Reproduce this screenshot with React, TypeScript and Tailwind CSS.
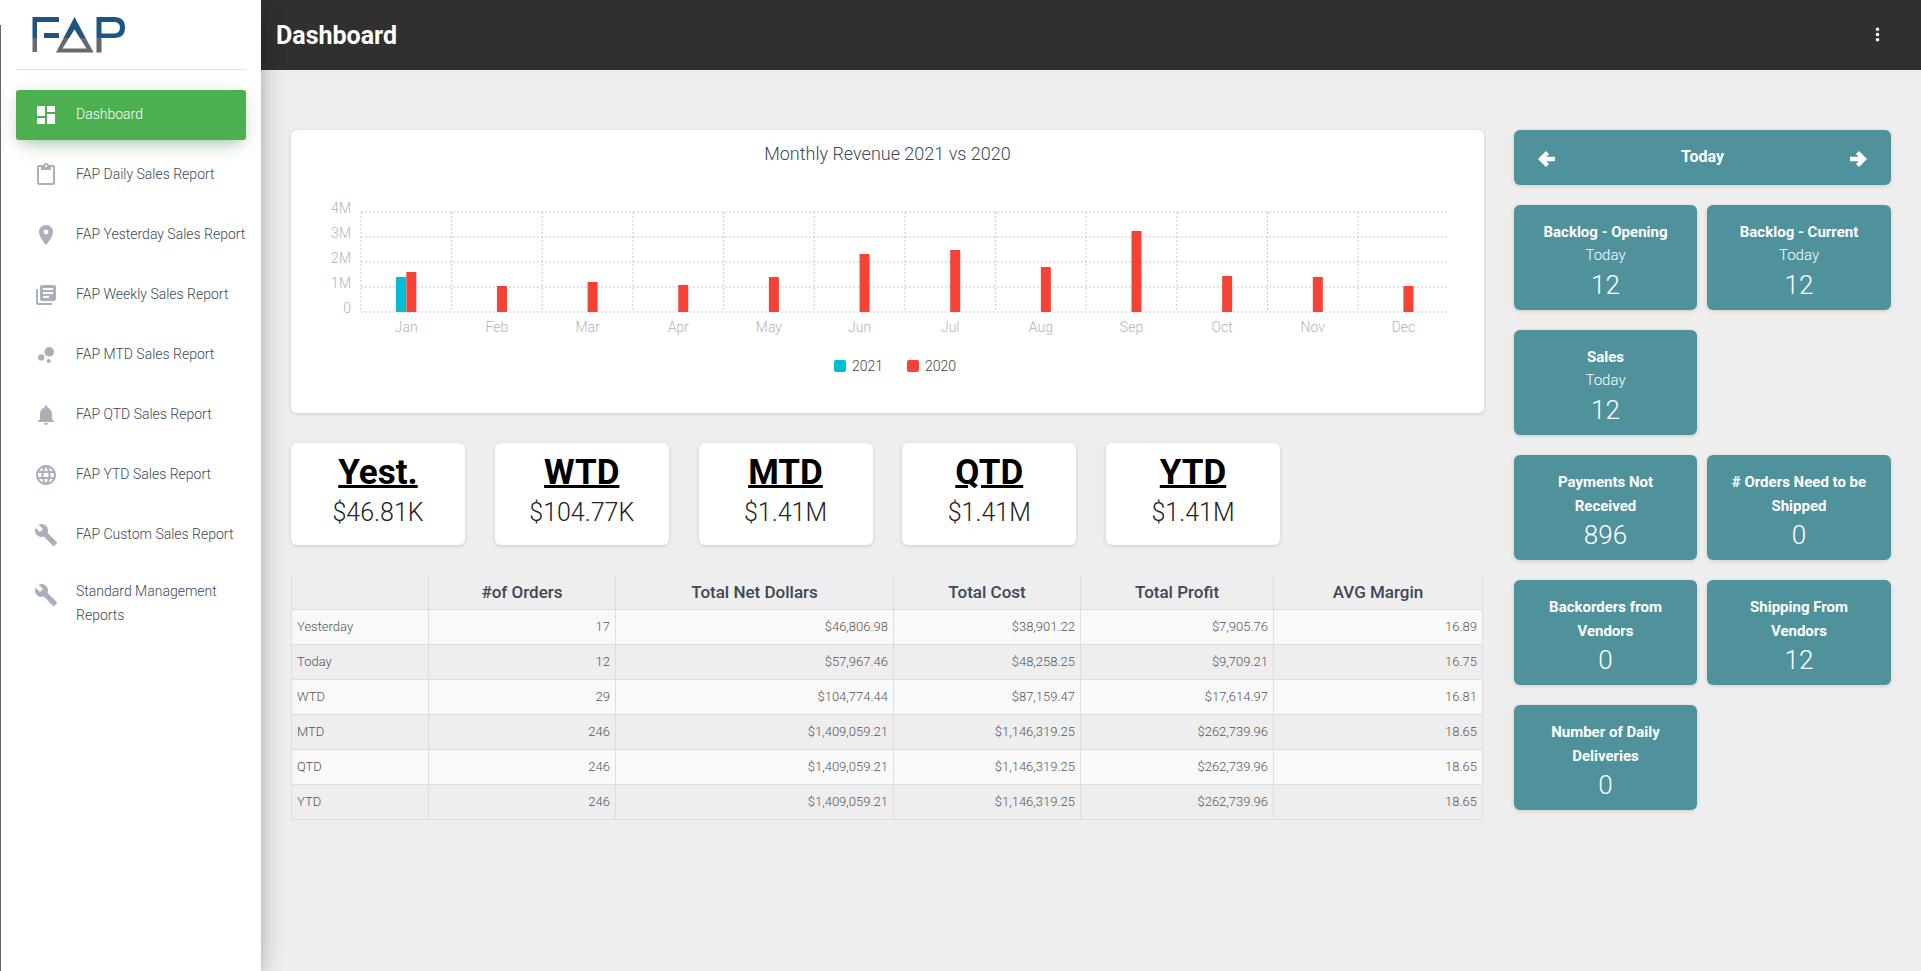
import {
  MdBubbleChart,
  MdBuild,
  MdContentPaste,
  MdDashboard,
  MdLanguage,
  MdLibraryBooks,
  MdLocationOn,
  MdMoreVert,
  MdNotifications,
} from "react-icons/md";

const navItems = [
  { label: "Dashboard", icon: MdDashboard, active: true },
  { label: "FAP Daily Sales Report", icon: MdContentPaste },
  { label: "FAP Yesterday Sales Report", icon: MdLocationOn },
  { label: "FAP Weekly Sales Report", icon: MdLibraryBooks },
  { label: "FAP MTD Sales Report", icon: MdBubbleChart },
  { label: "FAP QTD Sales Report", icon: MdNotifications },
  { label: "FAP YTD Sales Report", icon: MdLanguage },
  { label: "FAP Custom Sales Report", icon: MdBuild },
];

const months = [
  { name: "Jan", h: 40 },
  { name: "Feb", h: 26 },
  { name: "Mar", h: 30 },
  { name: "Apr", h: 27 },
  { name: "May", h: 35 },
  { name: "Jun", h: 58 },
  { name: "Jul", h: 62 },
  { name: "Aug", h: 45 },
  { name: "Sep", h: 81 },
  { name: "Oct", h: 36 },
  { name: "Nov", h: 35 },
  { name: "Dec", h: 26 },
];

const stats = [
  { title: "Yest.", value: "$46.81K" },
  { title: "WTD", value: "$104.77K" },
  { title: "MTD", value: "$1.41M" },
  { title: "QTD", value: "$1.41M" },
  { title: "YTD", value: "$1.41M" },
];

const rows = [
  ["Yesterday", "17", "$46,806.98", "$38,901.22", "$7,905.76", "16.89"],
  ["Today", "12", "$57,967.46", "$48,258.25", "$9,709.21", "16.75"],
  ["WTD", "29", "$104,774.44", "$87,159.47", "$17,614.97", "16.81"],
  ["MTD", "246", "$1,409,059.21", "$1,146,319.25", "$262,739.96", "18.65"],
  ["QTD", "246", "$1,409,059.21", "$1,146,319.25", "$262,739.96", "18.65"],
  ["YTD", "246", "$1,409,059.21", "$1,146,319.25", "$262,739.96", "18.65"],
];

const tiles = [
  { title: "Backlog - Opening", sub: "Today", value: "12" },
  { title: "Backlog - Current", sub: "Today", value: "12" },
  { title: "Sales", sub: "Today", value: "12" },
  { title: "Payments Not Received", value: "896", first: true },
  { title: "# Orders Need to be Shipped", value: "0" },
  { title: "Backorders from Vendors", value: "0" },
  { title: "Shipping From Vendors", value: "12" },
  { title: "Number of Daily Deliveries", value: "0" },
];

function Logo() {
  return (
    <svg className="absolute left-0 top-0" width="140" height="60" viewBox="0 0 140 60">
      <defs>
        <linearGradient id="logoFill" gradientUnits="userSpaceOnUse" x1="0" y1="17" x2="0" y2="52">
          <stop offset="0.59" stopColor="#1f5583" />
          <stop offset="0.59" stopColor="#666a6e" />
        </linearGradient>
      </defs>
      <g fill="url(#logoFill)">
        <path d="M32.5 17H59V22H37V52H32.5Z" />
        <path d="M44 33H59V38H44Z" />
        <path fillRule="evenodd" d="M74.5 17L93.5 52.5H56ZM74.5 29.5L62.5 48.5H86.5Z" />
        <path
          fillRule="evenodd"
          d="M96.5 17H114Q125 17 125 27.5Q125 38 114 38H101.5V52.5H96.5ZM101.5 22V33.5H113.5Q120 33.5 120 27.5Q120 22 113.5 22Z"
        />
      </g>
    </svg>
  );
}

// thick arrow, same shape both ways
function Arrow({ flip }: { flip?: boolean }) {
  return (
    <svg width="18" height="18" viewBox="0 0 18 18" className={flip ? "mt-[2px] -scale-x-100" : "mt-[2px]"}>
      <path d="M9.5 2.5L3 9L9.5 15.5M3.5 9H17" fill="none" stroke="white" strokeWidth="4.4" />
    </svg>
  );
}

function Sidebar() {
  return (
    <aside className="relative z-10 h-full w-[261px] shrink-0 bg-white shadow-[0_10px_30px_-12px_rgba(0,0,0,0.42),0_4px_25px_0_rgba(0,0,0,0.12),0_8px_10px_-5px_rgba(0,0,0,0.2)]">
      <Logo />
      <div className="absolute left-0 top-[25px] bottom-0 w-px bg-[#666]" />
      <div className="ml-4 h-[70px] w-[230px] border-b border-[#e2e2e2]" />
      <nav className="ml-4 mt-5 flex w-[230px] flex-col gap-[10px]">
        {navItems.map((item) => (
          <a
            key={item.label}
            className={
              item.active
                ? "flex h-[50px] rounded-[3px] bg-[#4caf50] pl-[18px] pt-[13px] text-white shadow-[0_12px_20px_-10px_rgba(76,175,80,0.28),0_4px_20px_0_rgba(0,0,0,0.12),0_7px_8px_-5px_rgba(76,175,80,0.2)]"
                : "flex h-[50px] pl-[18px] pt-[13px] text-[#3c4858]"
            }
          >
            <item.icon size={24} className={item.active ? "mr-[18px] text-white" : "mr-[18px] text-[#a9afbb]"} />
            <span className="-mt-px whitespace-nowrap text-sm font-light leading-6">{item.label}</span>
          </a>
        ))}
        <a className="flex pl-[18px] pt-[13px] text-[#3c4858]">
          <MdBuild size={24} className="mr-[18px] text-[#a9afbb]" />
          <span className="-mt-1 w-[150px] text-sm font-light leading-6">Standard Management Reports</span>
        </a>
      </nav>
    </aside>
  );
}

function RevenueChart() {
  const left = 361;
  const step = 90.65;
  const base = 312;
  return (
    <div className="h-[283px] rounded-md bg-white shadow-[0_1px_4px_0_rgba(0,0,0,0.14)]">
      <div className="h-9 pt-[11px] text-center text-lg font-light leading-[26px] text-[#3c4858]">
        Monthly Revenue 2021 vs 2020
      </div>
      <svg width="1193" height="247" viewBox="291 166 1193 247" className="block">
        {[0, 1, 2, 3, 4].map((i) => (
          <line key={i} x1={left} x2={1448} y1={212 + i * 25} y2={212 + i * 25} stroke="#c9c9c9" strokeDasharray="2 2" />
        ))}
        {months.map((m, i) => (
          <line
            key={m.name}
            x1={left + i * step}
            x2={left + i * step}
            y1={212}
            y2={base}
            stroke="#c9c9c9"
            strokeDasharray="2 2"
          />
        ))}
        {["4M", "3M", "2M", "1M", "0"].map((t, i) => (
          <text key={t} x={351} y={212.5 + i * 25} textAnchor="end" fontSize="14" fontWeight="300" fill="#b4b4b4">
            {t}
          </text>
        ))}
        <rect x={396} y={277} width={10} height={35} fill="#00bcd4" />
        {months.map((m, i) => (
          <g key={m.name}>
            <rect x={left + i * step + 45.3} y={base - m.h} width={10} height={m.h} fill="#f44336" />
            <text
              x={left + i * step + 45.3}
              y={332}
              textAnchor="middle"
              fontSize="14"
              fontWeight="300"
              fill="#b4b4b4"
            >
              {m.name}
            </text>
          </g>
        ))}
        <rect x={834} y={360} width={12} height={12} rx={2} fill="#00bcd4" />
        <text x={852} y={371} fontSize="14" fontWeight="300" fill="#444">
          2021
        </text>
        <rect x={907} y={360} width={12} height={12} rx={2} fill="#f44336" />
        <text x={925} y={371} fontSize="14" fontWeight="300" fill="#444">
          2020
        </text>
      </svg>
    </div>
  );
}

function StatCards() {
  return (
    <div className="mt-[30px] flex gap-[29.75px]">
      {stats.map((s) => (
        <div
          key={s.title}
          className="h-[102px] w-[174px] rounded-md bg-white pt-[10px] text-center shadow-[0_1px_4px_0_rgba(0,0,0,0.14)]"
        >
          <div className="text-[35px] font-bold leading-10 text-black underline decoration-[3px] underline-offset-[1px]">
            {s.title}
          </div>
          <div className="text-[25px] font-light leading-10 text-[#222]">{s.value}</div>
        </div>
      ))}
    </div>
  );
}

function SalesTable() {
  const th = "h-[34px] border-x border-b border-[#ddd] pt-[2px] text-[17px] font-medium text-[#3c4858]";
  return (
    <table className="mt-[30px] w-[1191px] table-fixed border-collapse">
      <thead>
        <tr>
          <th className={`${th} w-[137px]`} />
          <th className={`${th} w-[187px]`}>#of Orders</th>
          <th className={`${th} w-[278px]`}>Total Net Dollars</th>
          <th className={`${th} w-[187px]`}>Total Cost</th>
          <th className={`${th} w-[193px]`}>Total Profit</th>
          <th className={`${th} w-[209px]`}>AVG Margin</th>
        </tr>
      </thead>
      <tbody>
        {rows.map((row, i) => (
          <tr key={row[0]} className={i % 2 === 0 ? "bg-[#f9f9f9]" : "bg-[#eeeeee]"}>
            {row.map((cell, j) => (
              <td
                key={j}
                className={
                  j === 0
                    ? "h-[35px] border border-[#ddd] px-[5px] text-left text-[13px] font-light text-[#555]"
                    : "h-[35px] border border-[#ddd] px-[5px] text-right text-[13px] font-light text-[#555]"
                }
              >
                {cell}
              </td>
            ))}
          </tr>
        ))}
      </tbody>
    </table>
  );
}

function Tile({ title, sub, value, first }: { title: string; sub?: string; value: string; first?: boolean }) {
  return (
    <div
      className={`h-[105px] rounded-md bg-[#50929c] px-4 pt-[15px] text-center text-white shadow-[0_1px_4px_0_rgba(0,0,0,0.14)] ${
        first ? "col-start-1" : ""
      }`}
    >
      <div className="text-[15px] font-bold leading-6">{title}</div>
      {sub && <div className="-mt-px mb-px text-[15px] font-light leading-6">{sub}</div>}
      <div className="text-[26px] font-light leading-[34px]">{value}</div>
    </div>
  );
}

export default function App() {
  return (
    <div className="flex h-screen overflow-hidden bg-[#eeeeee] font-['Roboto',sans-serif]">
      <Sidebar />
      <div className="min-w-0 flex-1">
        <header className="flex h-[70px] items-center justify-between bg-[#303030] pl-[15px] pr-[33px] text-white">
          <h1 className="mt-px text-[25px] font-bold">Dashboard</h1>
          <MdMoreVert size={21} className="-mt-[2px]" />
        </header>
        <main className="flex pl-[30px] pr-[30px] pt-[60px]">
          <div className="w-[1193px] shrink-0">
            <RevenueChart />
            <StatCards />
            <SalesTable />
          </div>
          <div className="ml-[30px] flex-1">
            <div className="flex h-[55px] items-center justify-between rounded-md bg-[#50929c] px-6 text-white shadow-[0_1px_4px_0_rgba(0,0,0,0.14)]">
              <Arrow />
              <span className="-mt-[2px] text-base font-bold">Today</span>
              <Arrow flip />
            </div>
            <div className="mt-5 grid grid-cols-[183px_184px] gap-x-[10px] gap-y-5">
              {tiles.map((t) => (
                <Tile key={t.title} {...t} />
              ))}
            </div>
          </div>
        </main>
      </div>
    </div>
  );
}
